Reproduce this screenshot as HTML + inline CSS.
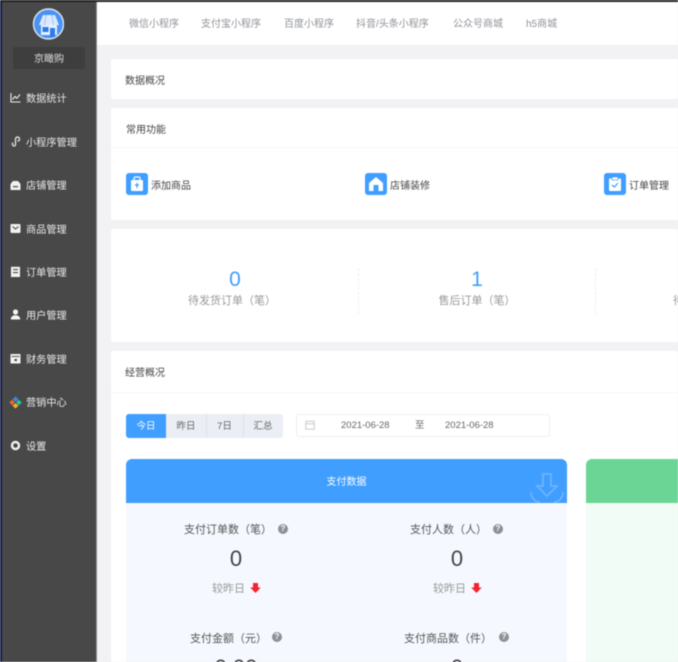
<!DOCTYPE html>
<html lang="zh">
<head>
<meta charset="utf-8">
<style>
html,body{margin:0;padding:0;width:678px;height:662px;overflow:hidden;background:#f2f2f4}
body{position:relative;font-family:"Liberation Sans","Noto Sans CJK SC",sans-serif;font-size:10px;color:#555}
.a{position:absolute}
.t{position:absolute;white-space:nowrap;line-height:14px;height:14px}
.c{text-align:center}
.nav{color:#e8e8e8;font-size:10.2px;left:26px}
.tab{color:#909399;font-size:10px;top:18px}
.h{color:#444;font-size:10px}
.lab{color:#555;font-size:11px}
.gray{color:#999;font-size:11px}
.num{color:#444;font-size:22px;line-height:26px;height:26px;text-align:center}
.bl{color:#409eff;font-size:21px;line-height:24px;height:24px;text-align:center}
.q{position:absolute;width:10px;height:10px;border-radius:50%;background:#8f8f94;color:#fff;font-size:8px;font-weight:bold;line-height:10px;text-align:center}
.card{position:absolute;background:#fff;left:111px;width:567px;border-radius:2px}
#root{position:absolute;left:0;top:0;width:678px;height:662px;filter:blur(.5px)}
</style>
</head>
<body>
<div id="root">
  <!-- sidebar -->
  <div class="a" style="left:0;top:0;width:2px;height:662px;background:#14184a"></div>
  <div class="a" style="left:2px;top:0;width:94px;height:662px;background:#484848"></div>
  <div class="a" style="left:96px;top:0;width:1px;height:662px;background:#8d8d8d"></div>
  <!-- top bar -->
  <div class="a" style="left:97px;top:2px;width:581px;height:43px;background:#fff"></div>
  <div class="a" style="left:0;top:0;width:678px;height:2px;background:#222"></div>

  <!-- logo -->
  <svg class="a" style="left:32px;top:8px" width="32" height="32" viewBox="0 0 32 32">
    <circle cx="16.500" cy="16" r="15" fill="#4a93f5" stroke="#dfe6ee" stroke-width="1.400"/>
    <rect x="9" y="16" width="16" height="11" fill="#e6f0fe"/>
    <path d="M11 7H23L27 17H7Z" fill="#dce9fd"/>
    <path d="M14 7L12.500 17M20 7L21.500 17" stroke="#9cc3f8" stroke-width="1"/>
    <rect x="10.500" y="19" width="6" height="5" fill="#2f7be6"/>
    <rect x="18" y="20" width="5" height="9" fill="#2f7be6"/>
  </svg>
  <div class="a" style="left:13px;top:47px;width:72px;height:22px;background:#3e3e3e;border-radius:2px"></div>
  <div class="t c" style="left:13px;top:53px;width:72px;color:#ddd;font-size:10px">京瞰购</div>

  <!-- nav icons -->
  <svg class="a" style="left:10px;top:92px" width="11" height="11" viewBox="0 0 11 11" fill="none" stroke="#eee" stroke-width="1.100"><path d="M1 1V10H10.500"/><path d="M2.500 7.500L5 4.500L6.800 6.300L10 2.500"/></svg>
  <svg class="a" style="left:10px;top:136px" width="11" height="11" viewBox="0 0 11 11" fill="none" stroke="#ddd" stroke-width="1.400"><path d="M2.500 6.500V8.500a1.500 1.500 0 0 0 3 0V3a2 2 0 0 1 4 0c0 1.500-1 2-2 2"/></svg>
  <svg class="a" style="left:10px;top:180px" width="11" height="11" viewBox="0 0 11 11" fill="#f2f2f2"><path d="M3 1H8L10.500 4V10H.5V4Z"/><rect x="3" y="6" width="5" height="1.200" fill="#484848"/></svg>
  <svg class="a" style="left:10px;top:223px" width="11" height="11" viewBox="0 0 11 11" fill="#f2f2f2"><rect x=".5" y="1" width="10" height="9" rx="1"/><path d="M2.500 3.500L5.500 6L8.500 3.500" fill="none" stroke="#484848" stroke-width="1.100"/></svg>
  <svg class="a" style="left:10px;top:266px" width="11" height="12" viewBox="0 0 11 12" fill="#f2f2f2"><path d="M1 .8H10V11H1Z"/><rect x="3" y="3" width="5" height="1.100" fill="#484848"/><rect x="3" y="6" width="5" height="1.100" fill="#484848"/></svg>
  <svg class="a" style="left:10px;top:309px" width="11" height="11" viewBox="0 0 11 11" fill="#f4f4f4"><circle cx="5.500" cy="3" r="2.600"/><path d="M.8 10.500C.8 7.500 3 6.300 5.500 6.300S10.200 7.500 10.200 10.500Z"/></svg>
  <svg class="a" style="left:10px;top:353px" width="11" height="11" viewBox="0 0 11 11" fill="#f2f2f2"><rect x=".5" y="1" width="10" height="9.500" rx=".6"/><rect x="1.500" y="3" width="8" height=".9" fill="#484848"/><rect x="4.500" y="6" width="2.500" height="2" fill="#484848"/></svg>
  <svg class="a" style="left:9px;top:396px" width="13" height="13" viewBox="0 0 13 13"><path d="M6.500 0.500L9.500 3.200L6.500 6L3.500 3.200Z" fill="#3f87ef"/><path d="M.3 6.500L3.100 3.800L5.800 6.500L3.100 9.200Z" fill="#ef6a24"/><path d="M12.700 6.500L9.900 3.800L7.200 6.500L9.900 9.200Z" fill="#2cc9a0"/><path d="M6.500 7L9.500 9.800L6.500 12.500L3.500 9.800Z" fill="#f4b32c"/></svg>
  <svg class="a" style="left:10px;top:440px" width="11" height="11" viewBox="0 0 11 11" fill="none"><circle cx="5.500" cy="5.500" r="3.500" stroke="#f2f2f2" stroke-width="2.400"/></svg>

  <div class="t nav" style="top:93px">数据统计</div>
  <div class="t nav" style="top:137px">小程序管理</div>
  <div class="t nav" style="top:180px">店铺管理</div>
  <div class="t nav" style="top:224px">商品管理</div>
  <div class="t nav" style="top:267px">订单管理</div>
  <div class="t nav" style="top:310px">用户管理</div>
  <div class="t nav" style="top:354px">财务管理</div>
  <div class="t nav" style="top:397px">营销中心</div>
  <div class="t nav" style="top:441px">设置</div>

  <!-- tabs -->
  <div class="t tab" style="left:129px">微信小程序</div>
  <div class="t tab" style="left:201px">支付宝小程序</div>
  <div class="t tab" style="left:284px">百度小程序</div>
  <div class="t tab" style="left:356px">抖音/头条小程序</div>
  <div class="t tab" style="left:453px">公众号商城</div>
  <div class="t tab" style="left:526px">h5商城</div>

  <!-- cards -->
  <div class="card" style="top:59px;height:40px"></div>
  <div class="t h" style="left:125px;top:75px">数据概况</div>

  <div class="card" style="top:108px;height:112px"></div>
  <div class="a" style="left:111px;top:147px;width:567px;height:1px;background:#f6f6f8"></div>
  <div class="t h" style="left:126px;top:124px">常用功能</div>

  <!-- quick icons -->
  <svg class="a" style="left:126px;top:173px" width="22" height="22" viewBox="0 0 22 22"><rect width="22" height="22" rx="3" fill="#409eff"/><rect x="5" y="7" width="12" height="11" rx="1" fill="#fff"/><path d="M8 7.500V5.500a1.500 1.500 0 0 1 1.500-1.500h3a1.500 1.500 0 0 1 1.500 1.500V7.500" fill="none" stroke="#fff" stroke-width="1.200"/><path d="M11 10v5M9 12h4" stroke="#409eff" stroke-width="1.200"/></svg>
  <svg class="a" style="left:365px;top:173px" width="22" height="22" viewBox="0 0 22 22"><rect width="22" height="22" rx="3" fill="#409eff"/><path d="M11 4L18 10V18H4V10Z" fill="#fff"/><rect x="8.500" y="12" width="5" height="6" fill="#409eff"/></svg>
  <svg class="a" style="left:604px;top:173px" width="22" height="22" viewBox="0 0 22 22"><rect width="22" height="22" rx="3" fill="#409eff"/><rect x="5" y="5.500" width="12" height="12.500" rx="1" fill="#fff"/><rect x="8" y="4" width="6" height="3" fill="#fff" stroke="#409eff" stroke-width=".7"/><path d="M8 12L10.300 14L14 10" fill="none" stroke="#409eff" stroke-width="1.200"/></svg>
  <div class="t h" style="left:151px;top:180px">添加商品</div>
  <div class="t h" style="left:390px;top:180px">店铺装修</div>
  <div class="t h" style="left:629px;top:180px">订单管理</div>

  <!-- stats -->
  <div class="card" style="top:229px;height:113px"></div>
  <div class="t bl" style="left:185px;top:268px;width:100px">0</div>
  <div class="t bl" style="left:427px;top:268px;width:100px">1</div>
  <div class="t c" style="left:172px;top:294px;width:120px;color:#999;font-size:11px">待发货订单（笔）</div>
  <div class="t c" style="left:417px;top:294px;width:120px;color:#999;font-size:11px">售后订单（笔）</div>
  <div class="t" style="left:673px;top:294px;color:#999;font-size:11px">待</div>
  <div class="a" style="left:358px;top:268px;height:46px;border-left:1px dashed #eeeef0"></div>
  <div class="a" style="left:595px;top:268px;height:46px;border-left:1px dashed #eeeef0"></div>

  <!-- business -->
  <div class="card" style="top:351px;height:311px"></div>
  <div class="a" style="left:111px;top:392px;width:567px;height:1px;background:#f6f6f8"></div>
  <div class="t h" style="left:125px;top:367px">经营概况</div>

  <!-- button group -->
  <div class="a" style="left:126px;top:414px;width:157px;height:24px;background:#ebeef5;border-radius:3px"></div>
  <div class="a" style="left:126px;top:414px;width:40px;height:24px;background:#409eff;border-radius:3px 0 0 3px"></div>
  <div class="a" style="left:206px;top:414px;width:1px;height:24px;background:#dfe2ea"></div>
  <div class="a" style="left:243px;top:414px;width:1px;height:24px;background:#dfe2ea"></div>
  <div class="t c" style="left:126px;top:420px;width:40px;color:#fff;font-size:9.500px">今日</div>
  <div class="t c" style="left:166px;top:420px;width:40px;color:#666;font-size:9.500px">昨日</div>
  <div class="t c" style="left:206px;top:420px;width:37px;color:#666;font-size:9.500px">7日</div>
  <div class="t c" style="left:243px;top:420px;width:40px;color:#666;font-size:9.500px">汇总</div>

  <!-- date picker -->
  <div class="a" style="left:296px;top:414px;width:252px;height:21px;border:1px solid #eeeef0;border-radius:3px;background:#fff"></div>
  <svg class="a" style="left:305px;top:420px" width="10" height="10" viewBox="0 0 10 10" fill="none" stroke="#c4c4c8" stroke-width=".9"><rect x=".8" y="1.300" width="8.400" height="7.900"/><path d="M.8 3.800H9.200"/></svg>
  <div class="t" style="left:341px;top:419px;color:#666;font-size:9.500px">2021-06-28</div>
  <div class="t" style="left:415px;top:419px;color:#666;font-size:9.500px">至</div>
  <div class="t" style="left:445px;top:419px;color:#666;font-size:9.500px">2021-06-28</div>

  <!-- blue panel -->
  <div class="a" style="left:126px;top:459px;width:441px;height:44px;background:#409eff;border-radius:6px 6px 0 0"></div>
  <div class="a" style="left:126px;top:503px;width:441px;height:159px;background:#f5f9ff"></div>
  <div class="t c" style="left:126px;top:476px;width:441px;color:#fff;font-size:10px">支付数据</div>
  <svg class="a" style="left:528px;top:472px" width="38" height="31" viewBox="0 0 38 31" fill="none" stroke="#6db5ff" stroke-width="1.700"><path d="M15 2H23V14H29L19 24L9 14H15Z"/><path d="M3 20C3 26 7 30 12 30M35 20C35 26 31 30 26 30"/></svg>

  <!-- green panel -->
  <div class="a" style="left:586px;top:459px;width:92px;height:44px;background:#6bd596;border-radius:6px 0 0 0"></div>
  <div class="a" style="left:586px;top:503px;width:92px;height:159px;background:#f0fcf5"></div>

  <!-- data cells -->
  <div class="t lab" style="left:184px;top:523px">支付订单数（笔）</div>
  <div class="q" style="left:278px;top:524px">?</div>
  <div class="t num" style="left:186px;top:546px;width:100px">0</div>
  <div class="t gray" style="left:212px;top:582px">较昨日</div>
  <svg class="a" style="left:250px;top:582px" width="11" height="12" viewBox="0 0 11 12"><path d="M3 1H8V5.500H10.800L5.500 11L.2 5.500H3Z" fill="#f5222d"/></svg>

  <div class="t lab" style="left:410px;top:523px">支付人数（人）</div>
  <div class="q" style="left:493px;top:524px">?</div>
  <div class="t num" style="left:407px;top:546px;width:100px">0</div>
  <div class="t gray" style="left:433px;top:582px">较昨日</div>
  <svg class="a" style="left:471px;top:582px" width="11" height="12" viewBox="0 0 11 12"><path d="M3 1H8V5.500H10.800L5.500 11L.2 5.500H3Z" fill="#f5222d"/></svg>

  <div class="t lab" style="left:190px;top:632px">支付金额（元）</div>
  <div class="q" style="left:272px;top:632px">?</div>
  <div class="t num" style="left:186px;top:655px;width:100px">0.00</div>

  <div class="t lab" style="left:404px;top:632px">支付商品数（件）</div>
  <div class="q" style="left:499px;top:632px">?</div>
  <div class="t num" style="left:407px;top:655px;width:100px">0</div>
</div>
</body>
</html>
